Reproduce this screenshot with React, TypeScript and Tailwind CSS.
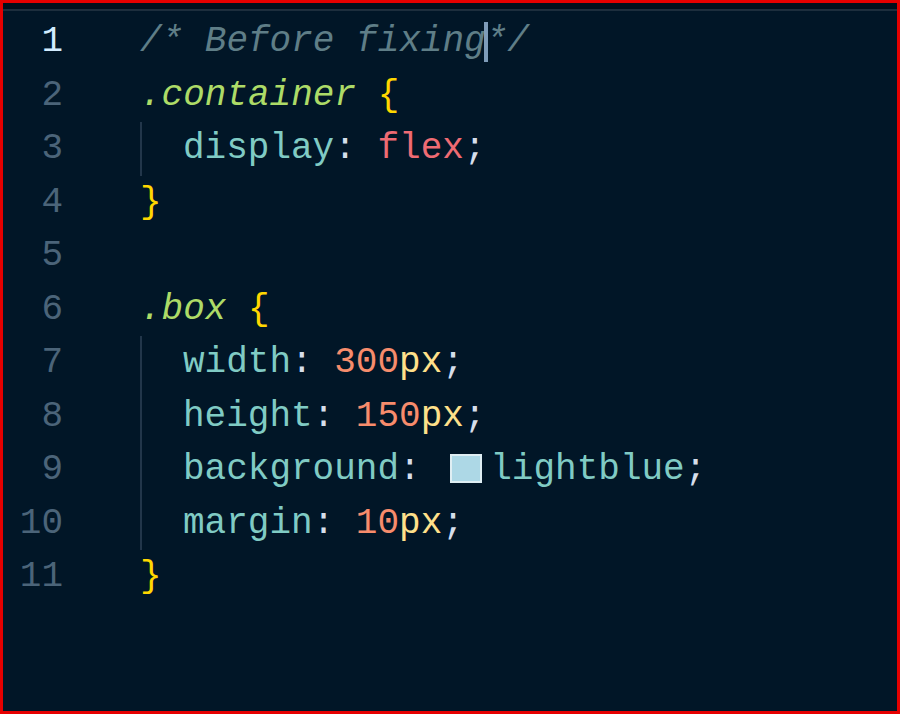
import React from 'react';

type Tok = { t: string; c: string; i?: boolean };

const C = {
  comment: '#5f7e87',
  sel: '#addb67',
  brace: '#ffd700',
  prop: '#80cbc4',
  punct: '#d6deeb',
  kw: '#ef6b73',
  num: '#f78c6c',
  unit: '#ffe08a',
};

const lines: { indent: boolean; toks: Tok[]; cursor?: boolean }[] = [
  { indent: false, cursor: true, toks: [{ t: '/* Before fixing', c: C.comment, i: true }] },
  { indent: false, toks: [{ t: '.container', c: C.sel, i: true }, { t: ' ', c: C.punct }, { t: '{', c: C.brace }] },
  { indent: true, toks: [{ t: 'display', c: C.prop }, { t: ': ', c: C.punct }, { t: 'flex', c: C.kw }, { t: ';', c: C.punct }] },
  { indent: false, toks: [{ t: '}', c: C.brace }] },
  { indent: false, toks: [] },
  { indent: false, toks: [{ t: '.box', c: C.sel, i: true }, { t: ' ', c: C.punct }, { t: '{', c: C.brace }] },
  { indent: true, toks: [{ t: 'width', c: C.prop }, { t: ': ', c: C.punct }, { t: '300', c: C.num }, { t: 'px', c: C.unit }, { t: ';', c: C.punct }] },
  { indent: true, toks: [{ t: 'height', c: C.prop }, { t: ': ', c: C.punct }, { t: '150', c: C.num }, { t: 'px', c: C.unit }, { t: ';', c: C.punct }] },
  { indent: true, toks: [{ t: 'background', c: C.prop }, { t: ': ', c: C.punct }, { t: '[swatch]', c: '' }, { t: 'lightblue', c: C.prop }, { t: ';', c: C.punct }] },
  { indent: true, toks: [{ t: 'margin', c: C.prop }, { t: ': ', c: C.punct }, { t: '10', c: C.num }, { t: 'px', c: C.unit }, { t: ';', c: C.punct }] },
  { indent: false, toks: [{ t: '}', c: C.brace }] },
];

function App() {
  return (
    <div className="w-[900px] h-[714px] border-[3px] border-[#e60000] bg-[#011627] overflow-hidden flex flex-col">
      {/* tab strip edge */}
      <div className="h-[8px] bg-[#010f1c] border-b-2 border-[#1d2e3d] shrink-0" />
      <div
        className="pt-[4px] text-[36px] leading-[53.5px] whitespace-pre"
        style={{ fontFamily: '"Liberation Mono", "DejaVu Sans Mono", monospace' }}
      >
        {lines.map((ln, idx) => (
          <div key={idx} className="flex h-[53.5px]">
            <div
              className={
                'w-[60px] text-right shrink-0 ' +
                (idx === 0 ? 'text-[#d2ecff]' : 'text-[#4b6479]')
              }
            >
              {idx + 1}
            </div>
            <div className="pl-[77px] flex items-center">
              {ln.indent && <span className="inline-block w-[43px] h-[53.5px] border-l-2 border-[#22364a]" />}
              {ln.toks.map((tk, j) =>
                tk.t === '[swatch]' ? (
                  <span key={j} className="inline-block w-[32px] h-[29px] bg-[#add8e6] border-2 border-[#dfeef3] ml-[8px] mr-[8px] mt-[-2px]" />
                ) : (
                  <span key={j} style={{ color: tk.c }} className={tk.i ? 'italic' : ''}>
                    {tk.t}
                  </span>
                )
              )}
              {ln.cursor && (
                <>
                  <span className="inline-block w-[4px] h-[40px] bg-[#7f9cb9] -mx-[2px]" />
                  <span style={{ color: C.comment }} className="italic">*/</span>
                </>
              )}
            </div>
          </div>
        ))}
      </div>
    </div>
  );
}

export default App;
